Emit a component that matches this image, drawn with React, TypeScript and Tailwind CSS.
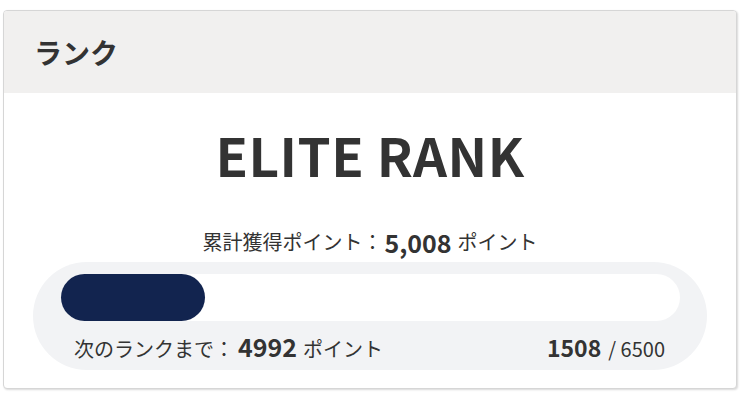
export default function App() {
  const current = 1508
  const goal = 6500
  const pct = (current / goal) * 100

  return (
    <div className="min-h-screen bg-white px-[3px] pt-[10px] font-['Noto_Sans_CJK_JP',sans-serif] text-[#333]">
      <div className="overflow-hidden rounded-[4px] border border-[#d6d6d6] bg-white shadow-[1px_1px_2px_rgba(0,0,0,0.15)]">
        {/* header */}
        <div className="flex h-[82px] items-center bg-[#f1f0ef] pl-[30px]">
          <h2 className="text-[28px] font-bold leading-none">ランク</h2>
        </div>

        {/* body */}
        <div className="px-[29px] pb-[18px]">
          <div className="flex h-[106px] items-end justify-center pb-[18px] text-[53px] font-bold leading-none tracking-[0.5px]">
            ELITE RANK
          </div>

          <div className="flex h-[63px] items-end justify-center pb-[7px] text-[20px] leading-[26px]">
            <span>累計獲得ポイント：</span>
            <span className="ml-[2px] mr-[6px] text-[25px] font-bold">5,008</span>
            <span>ポイント</span>
          </div>

          <div className="rounded-[54px] bg-[#f2f3f5] pl-[28px] pr-[27px] pt-[12px]">
            <div className="h-[47px] rounded-full bg-white">
              <div className="h-full rounded-full bg-[#12244f]" style={{ width: `${pct}%` }} />
            </div>
            <div className="flex h-[49px] items-center justify-between pl-[13px] pr-[15px] pt-[3px] text-[20px]">
              <div className="flex items-baseline">
                <span>次のランクまで：</span>
                <span className="ml-[4px] mr-[6px] text-[25px] font-bold">4992</span>
                <span>ポイント</span>
              </div>
              <div className="flex items-baseline">
                <span className="text-[23px] font-bold">1508</span>
                <span className="ml-[7px]">/ 6500</span>
              </div>
            </div>
          </div>
        </div>
      </div>
    </div>
  )
}
